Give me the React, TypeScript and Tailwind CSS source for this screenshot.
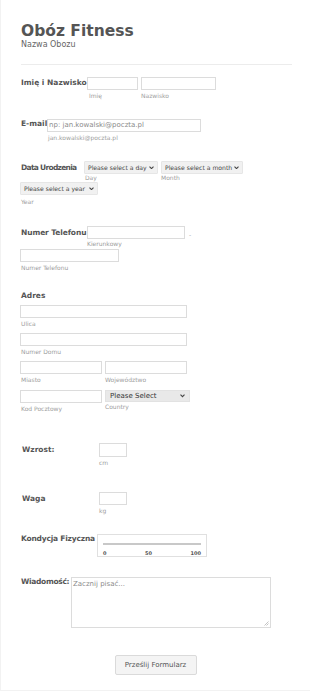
import React from "react";

const Chevron = ({ size = 5 }: { size?: number }) => (
  <svg width={size} height={size * 0.7} viewBox="0 0 10 7" className="shrink-0">
    <path d="M1 1.2 L5 5.2 L9 1.2" fill="none" stroke="#444" strokeWidth="2.2" />
  </svg>
);

const Sub = ({ children, className = "" }: { children: React.ReactNode; className?: string }) => (
  <div className={`text-[6px] leading-[8px] text-[#9d9d9d] whitespace-nowrap ${className}`}>{children}</div>
);

const Input = ({ className = "" }: { className?: string }) => (
  <div className={`h-[13px] border border-[#dcdcdc] bg-white ${className}`} />
);

const Sel = ({ text, className = "" }: { text: string; className?: string }) => (
  <div
    className={`h-[13px] flex items-center justify-between pl-[3px] pr-[3px] bg-[#f1f1f1] border border-[#e6e6e6] rounded-[1px] text-[6.1px] text-[#444] whitespace-nowrap ${className}`}
  >
    <span>{text}</span>
    <Chevron />
  </div>
);

const Label = ({ children, className = "" }: { children: React.ReactNode; className?: string }) => (
  <div className={`shrink-0 pl-[1px] text-[7.5px] font-bold text-[#555] whitespace-nowrap ${className}`}>{children}</div>
);

export default function App() {
  return (
    <div className="w-[310px] h-[691px] bg-white border-l border-b border-[#f2f2f2] text-[#555] overflow-hidden font-['DejaVu_Sans',Verdana,sans-serif]">
      <div className="pl-[19px] pr-[19px] pt-[21px]">
        {/* Header */}
        <div className="pl-[1px] text-[15.5px] leading-[20px] font-bold text-[#555]">Obóz Fitness</div>
        <div className="pl-[1px] -mt-[1px] text-[8px] leading-[10px] text-[#666]">Nazwa Obozu</div>
        <div className="ml-[1px] mt-[14px] h-px w-[271px] bg-[#ececec]" />

        {/* Imię i Nazwisko */}
        <div className="mt-[12px] flex items-start">
          <Label className="w-[67px] leading-[11px]">Imię i Nazwisko</Label>
          <div className="flex gap-[3px]">
            <div>
              <Input className="w-[51px]" />
              <Sub className="mt-[2px] pl-[2px]">Imię</Sub>
            </div>
            <div>
              <Input className="w-[75px]" />
              <Sub className="mt-[2px]">Nazwisko</Sub>
            </div>
          </div>
        </div>

        {/* E-mail */}
        <div className="mt-[19px] flex items-start">
          <Label className="w-[27px] leading-[9px]">E-mail</Label>
          <div>
            <div className="h-[13px] w-[154px] border border-[#dcdcdc] bg-white flex items-center pl-[1px] text-[7px] text-[#8a8a8a] whitespace-nowrap">
              np: jan.kowalski@poczta.pl
            </div>
            <Sub className="mt-[2px] pl-[1px]">jan.kowalski@poczta.pl</Sub>
          </div>
        </div>

        {/* Data Urodzenia */}
        <div className="mt-[19px] flex items-start">
          <Label className="w-[64px] leading-[13px] tracking-[-0.7px]">Data Urodzenia</Label>
          <div className="flex gap-[3px]">
            <div>
              <Sel text="Please select a day" className="w-[74px]" />
              <Sub className="leading-[7px] pl-[1px]">Day</Sub>
            </div>
            <div>
              <Sel text="Please select a month" className="w-[82px]" />
              <Sub className="leading-[7px]">Month</Sub>
            </div>
          </div>
        </div>
        <div>
          <Sel text="Please select a year" className="w-[78px]" />
          <Sub className="mt-[3px] pl-[1px]">Year</Sub>
        </div>

        {/* Numer Telefonu */}
        <div className="mt-[20px] flex items-start">
          <Label className="w-[67px] leading-[13px] tracking-[-0.1px]">Numer Telefonu</Label>
          <div>
            <div className="flex items-center">
              <Input className="w-[98px]" />
              <span className="ml-[4px] mt-[3px] text-[6px] text-[#aaa]">-</span>
            </div>
            <Sub className="mt-[1px]">Kierunkowy</Sub>
          </div>
        </div>
        <div className="mt-[1px]">
          <Input className="w-[99px]" />
          <Sub className="mt-[2px] pl-[1px]">Numer Telefonu</Sub>
        </div>

        {/* Adres */}
        <Label className="mt-[19px] leading-[10px]">Adres</Label>
        <div className="mt-[4px]">
          <Input className="w-[167px]" />
          <Sub className="mt-[2px] pl-[1px]">Ulica</Sub>
        </div>
        <div className="mt-[5px]">
          <Input className="w-[167px]" />
          <Sub className="mt-[2px] pl-[1px]">Numer Domu</Sub>
        </div>
        <div className="mt-[5px] flex gap-[3px]">
          <div>
            <Input className="w-[82px]" />
            <Sub className="mt-[2px] pl-[1px]">Miasto</Sub>
          </div>
          <div>
            <Input className="w-[82px]" />
            <Sub className="mt-[2px]">Województwo</Sub>
          </div>
        </div>
        <div className="mt-[6px] flex gap-[3px]">
          <div>
            <Input className="w-[82px]" />
            <Sub className="mt-[2px] pl-[1px]">Kod Pocztowy</Sub>
          </div>
          <div>
            <div className="h-[12px] w-[85px] flex items-center justify-between pl-[4px] pr-[4px] bg-[#e9e9e9] border border-[#e2e2e2] text-[7px] text-[#333] whitespace-nowrap">
              <span>Please Select</span>
              <Chevron />
            </div>
            <Sub className="mt-[1px]">Country</Sub>
          </div>
        </div>

        {/* Wzrost */}
        <div className="mt-[30px] flex items-start">
          <Label className="w-[79px] pl-[2px] leading-[14px]">Wzrost:</Label>
          <div>
            <div className="h-[14px] w-[28px] border border-[#dcdcdc] bg-white" />
            <Sub className="mt-[2px]">cm</Sub>
          </div>
        </div>

        {/* Waga */}
        <div className="mt-[25px] flex items-start">
          <Label className="w-[79px] pl-[2px] leading-[13px]">Waga</Label>
          <div>
            <Input className="w-[28px]" />
            <Sub className="mt-[2px]">kg</Sub>
          </div>
        </div>

        {/* Kondycja Fizyczna */}
        <div className="mt-[19px] flex items-start">
          <Label className="w-[77px] leading-[10px] tracking-[-0.2px]">Kondycja Fizyczna</Label>
          <div className="h-[23px] w-[110px] border border-[#e0e0e0] bg-white px-[5px] pt-[8px]">
            <div className="h-[2px] w-full bg-[#c8c8c8]" />
            <div className="mt-[5px] flex justify-between text-[5px] leading-[6px] text-[#555] font-bold">
              <span>0</span>
              <span>50</span>
              <span>100</span>
            </div>
          </div>
        </div>

        {/* Wiadomość */}
        <div className="mt-[20px] flex items-start">
          <Label className="w-[51px] leading-[9px] tracking-[-0.3px]">Wiadomość:</Label>
          <div className="relative h-[51px] w-[200px] border border-[#dcdcdc] bg-white pl-[1px] pt-[1px] text-[7px] leading-[10px] text-[#8a8a8a]">
            Zacznij pisać...
            <svg width="5" height="5" viewBox="0 0 5 5" className="absolute right-[1px] bottom-[1px]">
              <path d="M4.5 0.5 L0.5 4.5 M4.5 2.5 L2.5 4.5" stroke="#aaa" strokeWidth="0.7" />
            </svg>
          </div>
        </div>
      </div>

      {/* Button */}
      <div className="mt-[27px] flex justify-center">
        <div className="h-[20px] w-[82px] flex items-center justify-center bg-[#f4f4f4] border border-[#dadada] rounded-[2px] text-[7px] text-[#555] whitespace-nowrap">
          Prześlij Formularz
        </div>
      </div>
    </div>
  );
}
